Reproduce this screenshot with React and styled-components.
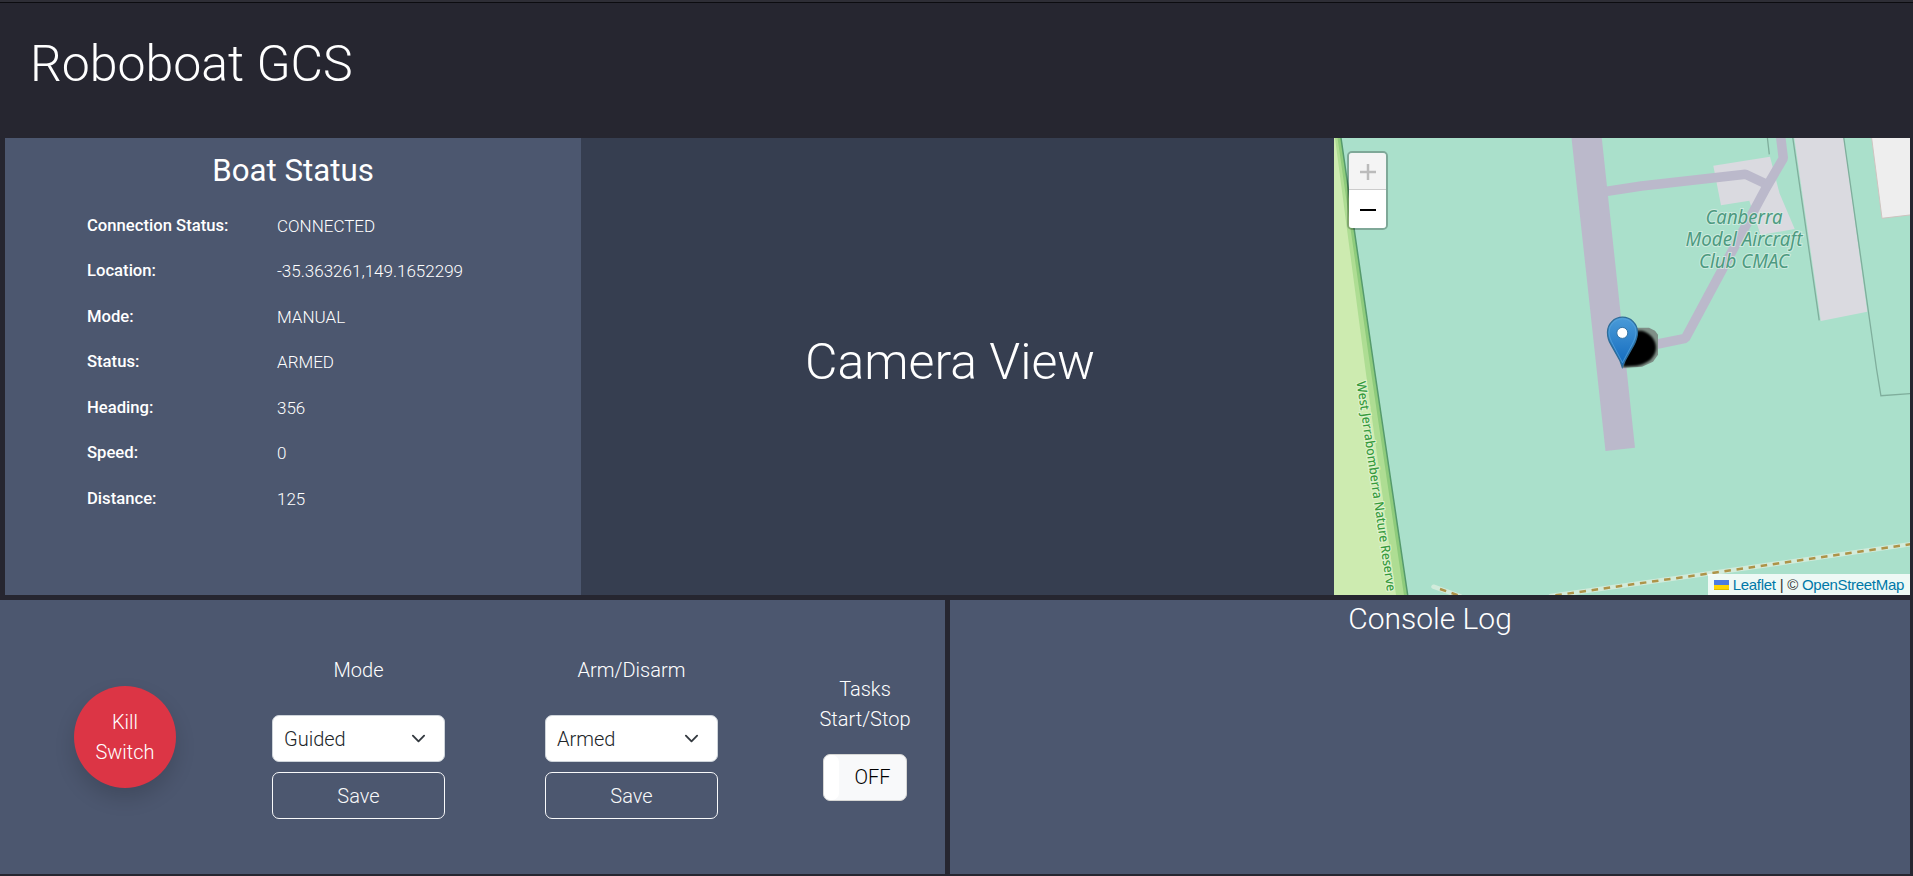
import React from "react";
import styled, { createGlobalStyle } from "styled-components";

const GlobalStyle = createGlobalStyle`
  *, *::before, *::after { box-sizing: border-box; }
  html { font-size: 20px; }
  body {
    margin: 0;
    background: #262630;
    color: #fff;
    font-family: Roboto, "Liberation Sans", sans-serif;
    font-weight: 300;
    line-height: 1.5;
    overflow: hidden;
  }
  h1, h2, p, dl, dt, dd { margin: 0; font-weight: inherit; }
`;

const Page = styled.div`
  display: flex;
  flex-direction: column;
  height: 876px;
  border-top: 2px solid #2e2e36;
`;

const Header = styled.header`
  height: 136px;
  border-top: 1px solid #0c0c10;
  padding: 31px 30px 0;
`;

const Title = styled.h1`
  font-size: 50px;
  line-height: 60px;
`;

const TopRow = styled.section`
  display: grid;
  grid-template-columns: 576px 753px 576px;
  height: 457px;
  margin-left: 5px;
`;

const BottomRow = styled.section`
  display: grid;
  grid-template-columns: 945px 960px;
  column-gap: 5px;
  height: 274px;
  margin-top: 5px;
`;

const Panel = styled.div`
  background: #4c576f;
`;

const StatusPanel = styled(Panel)`
  padding-top: 14px;
`;

const StatusTitle = styled.h2`
  && { font-weight: 400; }
  font-size: 31.25px;
  line-height: 37px;
  text-align: center;
`;

const StatusList = styled.dl`
  display: grid;
  grid-template-columns: 190px 1fr;
  grid-auto-rows: 45.5px;
  align-items: center;
  padding: 13.5px 0 0 82px;
  font-size: 17px;
`;

const StatusLabel = styled.dt`
  && { font-weight: 500; }
  padding-top: 1.5px;
  font-size: 16.65px;
`;

const StatusValue = styled.dd`
  padding-top: 2px;
`;

const CameraPanel = styled.div`
  display: flex;
  align-items: center;
  justify-content: center;
  padding: 0 15px 10px 0;
  background: #363e50;
  font-size: 50px;
  line-height: 60px;
`;

const ControlPanel = styled(Panel)`
  display: grid;
  grid-template-columns: 222px 273px 273px 177px;
`;

const ControlGroup = styled.div`
  display: flex;
  flex-direction: column;
  align-items: center;
  padding-top: ${(p) => p.$top}px;
  padding-left: ${(p) => p.$left || 0}px;
  text-align: center;
`;

const ControlLabel = styled.p`
  margin-bottom: ${(p) => p.$gap}px;
`;

const KillButton = styled.button`
  width: 102px;
  height: 102px;
  margin-left: 28px;
  padding: 0;
  border: 0;
  border-radius: 50%;
  background: #dc3545;
  color: #fff;
  font: 300 20px/30px Roboto, sans-serif;
  box-shadow: 0 10px 20px rgba(0, 0, 0, 0.15);
`;

const SelectBox = styled.div`
  display: flex;
  align-items: center;
  justify-content: space-between;
  width: 173px;
  height: 47px;
  padding: 0 18px 0 11px;
  border: 1px solid #ced4da;
  border-radius: 7px;
  background: #fff;
  color: #212529;
  text-align: left;
`;

const SaveButton = styled.button`
  width: 173px;
  height: 47px;
  margin-top: 10px;
  border: 1px solid #f8f9fa;
  border-radius: 7px;
  background: transparent;
  color: #f8f9fa;
  font: 300 20px/30px Roboto, sans-serif;
`;

const Toggle = styled.div`
  display: flex;
  width: 84px;
  height: 47px;
  border: 1px solid #d6d6d4;
  border-radius: 7px;
  overflow: hidden;
  background: #f8f9fa;
  color: #000;
`;

const ToggleHandle = styled.span`
  width: 15px;
  border-radius: 7px;
  background: #fff;
`;

const ToggleText = styled.span`
  flex: 1;
  line-height: 45px;
  text-align: center;
`;

const ConsolePanel = styled(Panel)`
  padding-top: 1px;
  font-size: 30px;
  line-height: 36px;
  text-align: center;
`;

const MapFrame = styled.div`
  position: relative;
  overflow: hidden;
  background: #aae0cb;
`;

const MapDrawing = styled.svg`
  display: block;
`;

const ZoomControl = styled.div`
  position: absolute;
  top: 13px;
  left: 13px;
  width: 41px;
  border: 2px solid rgba(0, 0, 0, 0.25);
  border-radius: 5px;
  background-clip: padding-box;
`;

const ZoomButton = styled.div`
  display: flex;
  align-items: center;
  justify-content: center;
  height: ${(p) => (p.$first ? 37 : 38)}px;
  padding-top: ${(p) => (p.$first ? 2 : 0)}px;
  border-bottom: ${(p) => (p.$first ? "1px solid #ccc" : "0")};
  border-radius: ${(p) => (p.$first ? "3px 3px 0 0" : "0 0 3px 3px")};
  background: ${(p) => (p.$first ? "#f4f4f4" : "#fff")};
  color: ${(p) => (p.$first ? "#bbb" : "#000")};
`;

const Attribution = styled.div`
  position: absolute;
  right: 0;
  bottom: 0;
  display: flex;
  align-items: center;
  gap: 4px;
  height: 21px;
  padding: 0 6px;
  background: rgba(255, 255, 255, 0.8);
  color: #333;
  font: 400 15px/21px "Liberation Sans", sans-serif;
  letter-spacing: -0.3px;
  white-space: nowrap;
`;

const Link = styled.a`
  color: #0078a8;
`;

const statusRows = [
  ["Connection Status:", "CONNECTED"],
  ["Location:", "-35.363261,149.1652299"],
  ["Mode:", "MANUAL"],
  ["Status:", "ARMED"],
  ["Heading:", "356"],
  ["Speed:", "0"],
  ["Distance:", "125"],
];

function Chevron() {
  return (
    <svg width="15" height="15" viewBox="0 0 16 16" fill="none" stroke="#343a40" strokeWidth="2" strokeLinecap="round" strokeLinejoin="round">
      <path d="m2 5 6 6 6-6" />
    </svg>
  );
}

function Select({ value }) {
  return (
    <SelectBox>
      {value}
      <Chevron />
    </SelectBox>
  );
}

function Marker() {
  return (
    <g transform="translate(0 .7)">
      <defs>
        <linearGradient id="pin" x1="0" y1="0" x2="0" y2="1">
          <stop offset="0" stopColor="#4a9bd8" />
          <stop offset="1" stopColor="#1068bd" />
        </linearGradient>
        <filter id="soft" x="-20%" y="-20%" width="140%" height="140%">
          <feGaussianBlur stdDeviation="1" />
        </filter>
      </defs>
      <path d="M289 229 300 189H315L321 192 324 196V216L319 223 308 228Z" fill="#7f8f87" />
      <path d="M289 228 296 192H308C316 194 322 201 322 209C322 218 314 225 303 227Z" fill="#000" filter="url(#soft)" />
      <path d="M288.3 228.5 286 222 277 206C274.500 202 273.500 198 273.500 193.500A15 15 0 0 1 303.500 193.500C303.500 198 302 202 300 206L291 222Z" fill="url(#pin)" stroke="#2e6c97" strokeWidth="1.300" />
      <path d="M288.500 224 279 206C276.500 201.500 275 197 275 193.500A13.500 13.500 0 0 1 302 193.500C302 197 300.500 201.500 298 206Z" fill="none" stroke="#5aa5dc" strokeWidth="1" opacity=".7" />
      <circle cx="288.300" cy="194.200" r="5.500" fill="#fff" stroke="#3574a5" strokeWidth="1" />
    </g>
  );
}

function MapView() {
  return (
    <MapFrame>
      <MapDrawing width="576" height="457" viewBox="0 0 576 457">
        <path d="M0 0H6.800L40.500 232 73.700 457H0Z" fill="#cdebb0" />
        <path d="M1 0H6.800L40.500 232 73.700 457H62L31.500 232Z" fill="#aedd93" />
        <path d="M5.300 0 38.500 232 71.700 457" fill="none" stroke="#8ecb7c" strokeWidth="3.500" />
        <path d="M7 0 40.500 232 73.700 457" fill="none" stroke="#559a6c" strokeWidth="1.500" />
        <path d="M379.300 27.700 436 18.700 445.500 55.300 460.700 91 426.600 97 415.300 62.700 387 67.300Z" fill="#dadae0" />
        <path d="M460.300 0H509.800L533.300 173.700 486.800 183Z" fill="#dadae0" />
        <path d="M537.400-2 548 80.300 580 76.500V-2Z" fill="#eee" stroke="#cfc4c0" />
        <g fill="none" stroke="#7fae9c" strokeWidth="1.300">
          <path d="M458.800 0 485.200 182.300M433.400 0 435.300 16.300" />
          <path d="M509.800 0 542.700 232 546.900 257.700 578 255.500" />
        </g>
        <path d="M237.500 0H267.800L301 309.700 271.500 313Z" fill="#bbb9cb" />
        <g fill="none" stroke="#bbb9cb" strokeWidth="9.500" strokeLinejoin="bevel">
          <path d="M270 53.700 307.500 48 411.500 36.300 434.200 47" />
          <path d="M446.700-1 449.300 20.300 432 50 351.400 200.300 323.700 206 288 212" />
        </g>
        <g fill="none">
          <path d="M216.700 458 364.200 437 578 406M99.500 448.700 126 458" stroke="#d2ebdb" strokeWidth="4.500" strokeLinecap="round" />
          <path d="M578 406 364.200 437 216.700 458M106 451 126 458" stroke="#ae9348" strokeWidth="2.500" strokeDasharray="6.500 5.700" />
        </g>
        <g fontFamily="Noto Sans, sans-serif" fontStyle="italic" fontWeight="400" fontSize="19" fill="#4d9a80" stroke="#d9efe6" strokeWidth="2" strokeOpacity=".75" paintOrder="stroke" textAnchor="middle">
          <text x="410" y="85.500" textLength="77" lengthAdjust="spacingAndGlyphs">Canberra</text>
          <text x="410" y="107.700" textLength="117" lengthAdjust="spacingAndGlyphs">Model Aircraft</text>
          <text x="410" y="130" textLength="90" lengthAdjust="spacingAndGlyphs">Club CMAC</text>
        </g>
        <text transform="translate(22.500 244) rotate(81.700)" fontFamily="Noto Sans, sans-serif" fontWeight="500" fontSize="13" fill="#379b3d" stroke="#e0f3cf" strokeWidth="2" paintOrder="stroke" textLength="212" lengthAdjust="spacingAndGlyphs">West Jerrabomberra Nature Reserve</text>
        <Marker />
      </MapDrawing>
      <ZoomControl>
        <ZoomButton $first>
          <svg width="18" height="18" viewBox="0 0 18 18" stroke="currentColor" strokeWidth="2.500"><path d="M1 9H17M9 1V17" /></svg>
        </ZoomButton>
        <ZoomButton>
          <svg width="18" height="18" viewBox="0 0 18 18" stroke="currentColor" strokeWidth="2"><path d="M1 10H17" /></svg>
        </ZoomButton>
      </ZoomControl>
      <Attribution>
        <svg width="15" height="10" viewBox="0 0 15 10"><path fill="#4c7be1" d="M0 0h15v5H0z" /><path fill="#ffd500" d="M0 5h15v4H0z" /><path fill="#e0bc00" d="M0 9h15v1H0z" /></svg>
        <Link>Leaflet</Link>
        <span>|</span>
        <span>©</span>
        <Link>OpenStreetMap</Link>
      </Attribution>
    </MapFrame>
  );
}

export default function App() {
  return (
    <>
      <GlobalStyle />
      <Page>
        <Header>
          <Title>Roboboat GCS</Title>
        </Header>
        <TopRow>
          <StatusPanel>
            <StatusTitle>Boat Status</StatusTitle>
            <StatusList>
              {statusRows.map(([label, value]) => (
                <React.Fragment key={label}>
                  <StatusLabel>{label}</StatusLabel>
                  <StatusValue>{value}</StatusValue>
                </React.Fragment>
              ))}
            </StatusList>
          </StatusPanel>
          <CameraPanel>Camera View</CameraPanel>
          <MapView />
        </TopRow>
        <BottomRow>
          <ControlPanel>
            <ControlGroup $top={86}>
              <KillButton>Kill<br />Switch</KillButton>
            </ControlGroup>
            <ControlGroup $top={55}>
              <ControlLabel $gap={30}>Mode</ControlLabel>
              <Select value="Guided" />
              <SaveButton>Save</SaveButton>
            </ControlGroup>
            <ControlGroup $top={55}>
              <ControlLabel $gap={30}>Arm/Disarm</ControlLabel>
              <Select value="Armed" />
              <SaveButton>Save</SaveButton>
            </ControlGroup>
            <ControlGroup $top={74} $left={17}>
              <ControlLabel $gap={20}>Tasks<br />Start/Stop</ControlLabel>
              <Toggle>
                <ToggleHandle />
                <ToggleText>OFF</ToggleText>
              </Toggle>
            </ControlGroup>
          </ControlPanel>
          <ConsolePanel>Console Log</ConsolePanel>
        </BottomRow>
      </Page>
    </>
  );
}
